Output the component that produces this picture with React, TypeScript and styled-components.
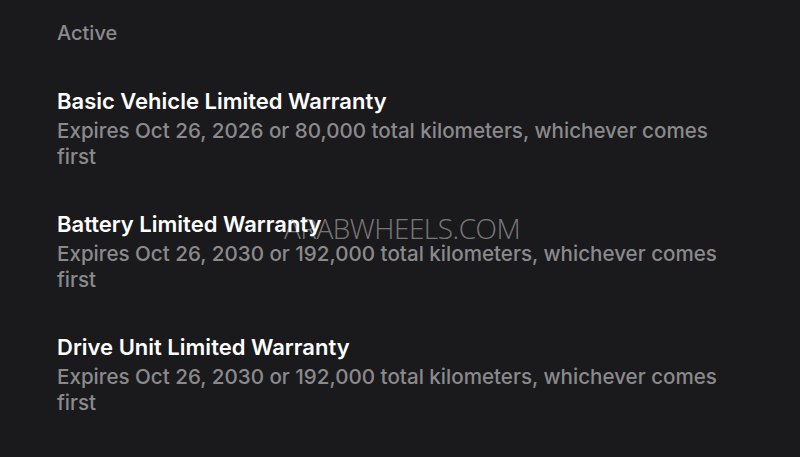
import styled, { createGlobalStyle } from "styled-components";

const GlobalStyle = createGlobalStyle`
  html, body {
    margin: 0;
    padding: 0;
    background: #1a1a1c;
  }
  body {
    font-family: "Inter", "Liberation Sans", sans-serif;
    -webkit-font-smoothing: antialiased;
  }
`;

const Page = styled.div`
  position: relative;
  width: 800px;
  height: 457px;
  overflow: hidden;
  background: #1a1a1c;
  box-sizing: border-box;
  padding: 20px 0 0 57px;
`;

const SectionLabel = styled.div`
  color: #8b8b8d;
  font-size: 20px;
  font-weight: 500;
  line-height: 26px;
  margin-bottom: 42px;
`;

const List = styled.ul`
  list-style: none;
  margin: 0;
  padding: 0;
  width: 676px;
  display: flex;
  flex-direction: column;
  gap: 41px;
`;

const Item = styled.li`
  display: flex;
  flex-direction: column;
`;

const Title = styled.h3`
  margin: 0;
  color: #ffffff;
  font-size: 22px;
  font-weight: 600;
  line-height: 26px;
`;

const Detail = styled.p`
  margin: 4px 0 0;
  color: #8a8a8c;
  font-size: 20.6px;
  font-weight: 500;
  line-height: 26px;
`;

const Watermark = styled.div`
  position: absolute;
  left: 284px;
  top: 209px;
  font-family: "Open Sans", "Liberation Sans", sans-serif;
  font-weight: 300;
  font-size: 28px;
  letter-spacing: -0.5px;
  color: rgba(255, 255, 255, 0.42);
  pointer-events: none;
`;

const warranties = [
  {
    title: "Basic Vehicle Limited Warranty",
    detail: "Expires Oct 26, 2026 or 80,000 total kilometers, whichever comes first",
  },
  {
    title: "Battery Limited Warranty",
    detail: "Expires Oct 26, 2030 or 192,000 total kilometers, whichever comes first",
  },
  {
    title: "Drive Unit Limited Warranty",
    detail: "Expires Oct 26, 2030 or 192,000 total kilometers, whichever comes first",
  },
];

const App = () => {
  return (
    <>
      <GlobalStyle />
      <Page>
        <SectionLabel>Active</SectionLabel>
        <List>
          {warranties.map((w) => (
            <Item key={w.title}>
              <Title>{w.title}</Title>
              <Detail>{w.detail}</Detail>
            </Item>
          ))}
        </List>
        <Watermark>ARABWHEELS.COM</Watermark>
      </Page>
    </>
  );
};

export default App;
